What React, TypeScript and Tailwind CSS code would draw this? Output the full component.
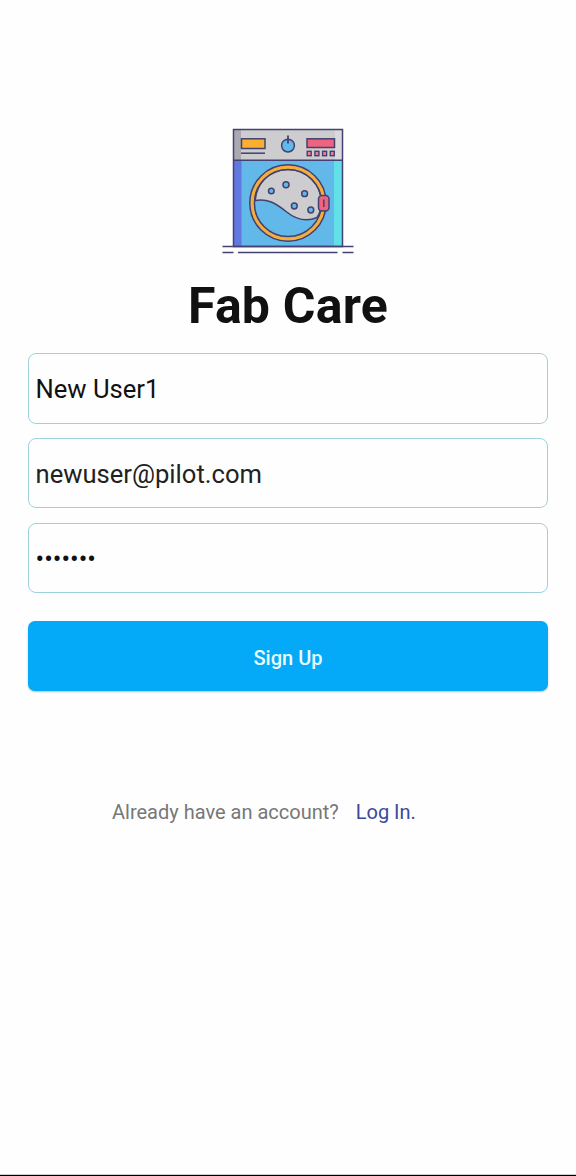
import React from "react";

function WashingMachine() {
  return (
    <svg viewBox="216 122 144 138" className="h-[138px] w-36" fill="none" stroke="#44406f" strokeWidth="1.5">
      <g stroke="none">
        <rect x="233" y="129" width="110" height="31" fill="#cdcdcf" />
        <rect x="233" y="129" width="8" height="31" fill="#aaa8b0" />
        <rect x="335" y="129" width="8" height="31" fill="#dadade" />
        <rect x="233" y="160" width="110" height="86" fill="#62b8e8" />
        <rect x="233" y="160" width="8.5" height="86" fill="#6078e0" />
        <rect x="334" y="160" width="9" height="86" fill="#62e0e8" />
      </g>
      <rect x="233.5" y="129.5" width="109" height="117" />
      <path d="M233 160.2h110" />
      <rect x="241.5" y="138.8" width="23.5" height="9.7" fill="#f9b02e" />
      <path d="M241 153.2h24" />
      <circle cx="288" cy="145.6" r="6.4" fill="#62b8ea" />
      <path d="M288 135.5v8" strokeWidth="1.8" />
      <rect x="307" y="138.8" width="27.5" height="8.7" fill="#ee647f" />
      <g fill="#ee7f97" strokeWidth="1.4">
        <rect x="307.2" y="151.3" width="4" height="4.4" />
        <rect x="314.9" y="151.3" width="4" height="4.4" />
        <rect x="322.6" y="151.3" width="4" height="4.4" />
        <rect x="330.3" y="151.3" width="4" height="4.4" />
      </g>
      <circle cx="288" cy="203" r="35" fill="#62b8e8" stroke="none" />
      <path
        d="M255.2 200.5C256.5 182.5 270 169.500 288 169.500C306 169.500 321.500 184 321.500 203C321.500 209 320 213 317 217.500C306 222.500 296 219.500 286 211.500C276 203.500 267 198 255.200 200.500Z"
        fill="#cdcdcf"
      />
      <circle cx="288" cy="203" r="36" stroke="#f5ad3d" strokeWidth="4" />
      <circle cx="288" cy="203" r="38.2" />
      <circle cx="288" cy="203" r="33.6" />
      <g fill="#62b8ea">
        <circle cx="271.3" cy="191" r="2.8" />
        <circle cx="286" cy="184.8" r="3" />
        <circle cx="304.6" cy="193.7" r="2.9" />
        <circle cx="294.3" cy="206" r="2.9" />
        <circle cx="310.8" cy="210" r="2.9" />
      </g>
      <rect x="318.5" y="195.500" width="10.500" height="15.500" rx="3.500" fill="#ee647f" />
      <path d="M323.800 199.500v7.500" />
      <path d="M222.500 246.500h131M222.500 252.400h11M238 252.400h99.500M342.500 252.400h11" />
    </svg>
  );
}

const field =
  "block w-full rounded-[8px] border border-[#9dd2dc] bg-transparent pl-[6.500px] pr-2 pt-[1px] text-[25.600px] outline-none";

export default function App() {
  return (
    <main className="flex h-[1176px] w-[576px] flex-col bg-[#fefefe] px-7 pt-[122px] [font-family:Roboto,sans-serif]">
      <header className="flex flex-col items-center">
        <WashingMachine />
        <h1 className="mt-[16px] text-[50px] leading-[60px] font-bold tracking-[0.2px] text-[#111111]">Fab Care</h1>
      </header>
      <form className="mt-[17px] flex flex-col" onSubmit={(e) => e.preventDefault()}>
        <input
          className={`${field} h-[71px] text-[#111111]`}
          type="text"
          aria-label="Name"
          defaultValue="New User1"
        />
        <input
          className={`${field} mt-[14px] h-[70px] pt-[2px] text-[#222222]`}
          type="email"
          aria-label="Email"
          defaultValue="newuser@pilot.com"
        />
        <input
          className={`${field} mt-[15px] h-[70px] text-[#111111]`}
          type="password"
          aria-label="Password"
          defaultValue="newuser"
        />
        <button
          type="submit"
          className="mt-[28px] h-[70px] rounded-[7px] bg-[#04a9f7] pt-[3px] text-[20px] font-medium text-[#e9fbff] shadow-[0_1px_2px_rgba(0,0,0,0.25)]"
        >
          Sign Up
        </button>
      </form>
      <p className="mt-[106px] flex pl-[84px] text-[20px] leading-[30px]">
        <span className="text-[#777777]">Already have an account?</span>
        <a className="ml-[17px] text-[#3c4899]">Log In.</a>
      </p>
      <div className="-mx-7 mt-auto h-[2px] border-t border-[#c9d0cd] bg-black" />
    </main>
  );
}
